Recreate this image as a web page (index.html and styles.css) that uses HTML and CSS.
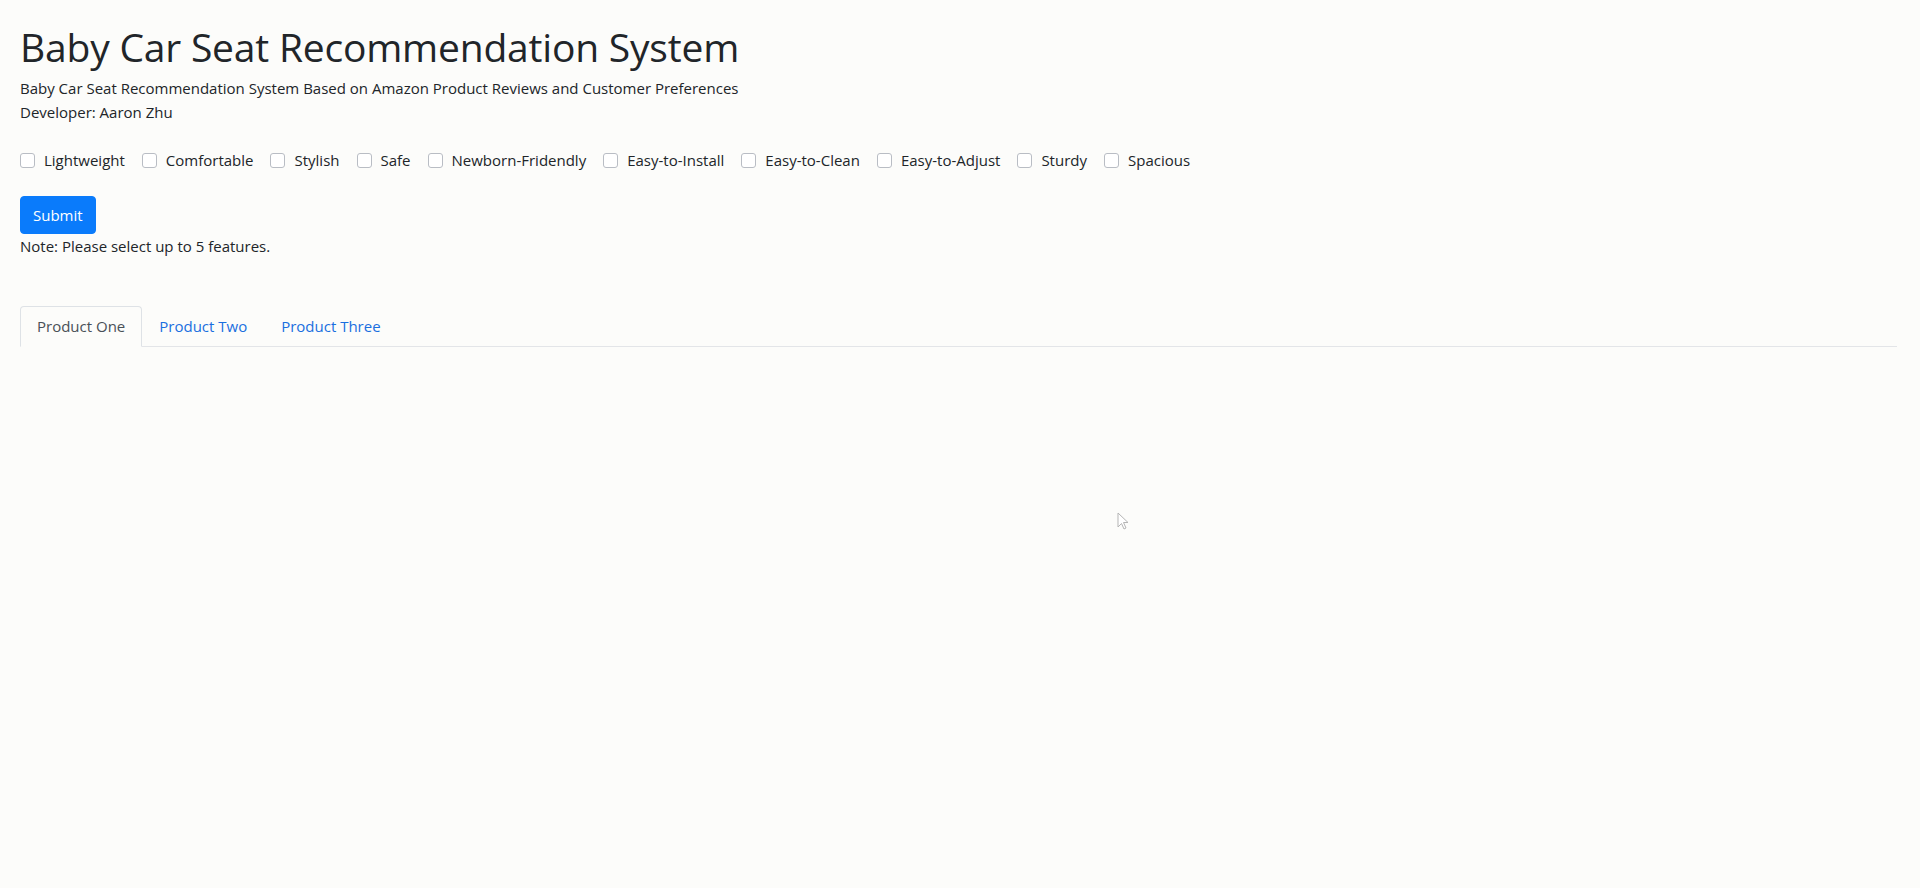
FILE: index.html
```html
<!DOCTYPE html>
<html lang="en">
<head>
<meta charset="utf-8">
<title>Baby Car Seat Recommendation System</title>
<link rel="stylesheet" href="styles.css">
</head>
<body>
<div class="page">
  <h1 class="title">Baby Car Seat Recommendation System</h1>
  <p class="line">Baby Car Seat Recommendation System Based on Amazon Product Reviews and Customer Preferences</p>
  <p class="line">Developer: Aaron Zhu</p>

  <form class="features">
    <label class="feature"><input type="checkbox" class="box"><span>Lightweight</span></label>
    <label class="feature"><input type="checkbox" class="box"><span>Comfortable</span></label>
    <label class="feature"><input type="checkbox" class="box"><span>Stylish</span></label>
    <label class="feature"><input type="checkbox" class="box"><span>Safe</span></label>
    <label class="feature"><input type="checkbox" class="box"><span>Newborn-Fridendly</span></label>
    <label class="feature"><input type="checkbox" class="box"><span>Easy-to-Install</span></label>
    <label class="feature"><input type="checkbox" class="box"><span>Easy-to-Clean</span></label>
    <label class="feature"><input type="checkbox" class="box"><span>Easy-to-Adjust</span></label>
    <label class="feature"><input type="checkbox" class="box"><span>Sturdy</span></label>
    <label class="feature"><input type="checkbox" class="box"><span>Spacious</span></label>
  </form>

  <button type="button" class="submit">Submit</button>
  <p class="line">Note: Please select up to 5 features.</p>

  <ul class="tabs">
    <li class="tab active">Product One</li>
    <li class="tab">Product Two</li>
    <li class="tab">Product Three</li>
  </ul>
</div>
<svg class="cursor" width="12" height="19" viewBox="0 0 12 19"><path d="M1 1 L1 15 L4.5 11.5 L7 17 L9 16 L6.5 10.5 L11 10.5 Z" fill="#fff" stroke="#b5b5b5" stroke-width="1"/></svg>
</body>
</html>
```

FILE: styles.css
```css
html, body {
  margin: 0;
  padding: 0;
  background: #fcfcfa;
}
body {
  font-family: "Open Sans", "Noto Sans", sans-serif;
  font-size: 15px;
  line-height: 24px;
  color: #212529;
  min-height: 888px;
}
.page {
  padding: 25px 23px 0 20px;
}
.title {
  margin: 0 0 8px 0;
  font-size: 39px;
  line-height: 43px;
  font-weight: 500;
  letter-spacing: -0.2px;
  color: #212529;
}
.line {
  margin: 0;
}
.features {
  display: flex;
  flex-wrap: wrap;
  column-gap: 17px;
  margin: 24px 0;
}
.feature {
  display: flex;
  align-items: center;
  gap: 9px;
}
.box {
  appearance: none;
  -webkit-appearance: none;
  margin: 0;
  width: 15px;
  height: 15px;
  border: 1px solid #b9bdc4;
  border-radius: 3px;
  background: #fff;
}
.submit {
  display: block;
  height: 38px;
  padding: 0 12px;
  border: 1px solid #0a7bfb;
  border-radius: 4px;
  background: #0a7bfb;
  color: #fff;
  font-family: inherit;
  font-size: 15px;
}
.tabs {
  display: flex;
  list-style: none;
  margin: 48px 0 0 0;
  padding: 0;
  border-bottom: 1px solid #e3e5e8;
}
.tab {
  height: 39px;
  line-height: 39px;
  padding: 0 16px;
  margin-bottom: -1px;
  border: 1px solid transparent;
  border-radius: 4px 4px 0 0;
  color: #1a6fe0;
}
.tab.active {
  color: #495057;
  background: #fcfcfa;
  border-color: #dee2e6 #dee2e6 #fcfcfa;
}
.cursor {
  position: absolute;
  left: 1117px;
  top: 512px;
}
```
